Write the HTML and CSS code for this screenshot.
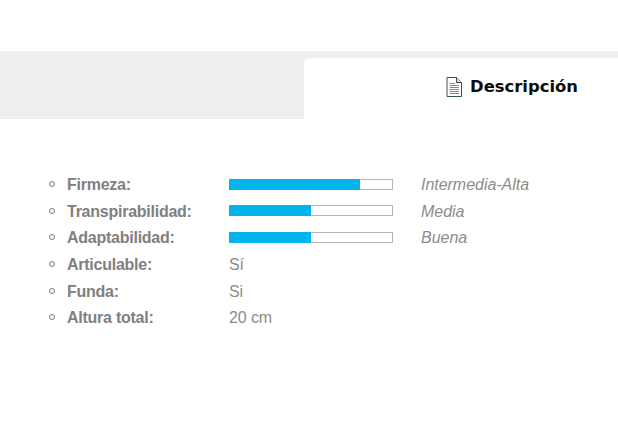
FILE: index.html
```html
<!DOCTYPE html>
<html lang="es">
<head>
    <meta charset="UTF-8">
    <title>Descripción</title>
    <link rel="stylesheet" href="styles.css">
</head>
<body>
    <!-- Tabs -->
    <div class="tabs">
        <div class="tab">
            <svg class="tab-icon" width="16" height="20" viewBox="0 0 16 20">
                <path d="M1 .5H10.500L15.500 5.500V19.500H1Z" fill="#fff" stroke="#3c5250"/>
                <path d="M10.500 .5V5.500H15.500" fill="#ddd" stroke="#3c5250"/>
                <path d="M3.500 6.500H9M3.500 8.500H13M3.500 10.500H13M3.500 12.500H13M3.500 14.500H13M3.500 16.500H13" stroke="#8a8a8a" stroke-width="1"/>
            </svg>
            <span class="tab-label">Descripción</span>
        </div>
    </div>

    <!-- Specs -->
    <ul class="specs">
        <li class="spec">
            <span class="spec-name">Firmeza:</span>
            <span class="bar"><span class="bar-fill" style="width: 80%"></span></span>
            <em class="spec-note">Intermedia-Alta</em>
        </li>
        <li class="spec">
            <span class="spec-name">Transpirabilidad:</span>
            <span class="bar"><span class="bar-fill" style="width: 50%"></span></span>
            <em class="spec-note">Media</em>
        </li>
        <li class="spec">
            <span class="spec-name">Adaptabilidad:</span>
            <span class="bar"><span class="bar-fill" style="width: 50%"></span></span>
            <em class="spec-note">Buena</em>
        </li>
        <li class="spec">
            <span class="spec-name">Articulable:</span>
            <span class="spec-value">Sí</span>
        </li>
        <li class="spec">
            <span class="spec-name">Funda:</span>
            <span class="spec-value">Si</span>
        </li>
        <li class="spec">
            <span class="spec-name">Altura total:</span>
            <span class="spec-value">20 cm</span>
        </li>
    </ul>
</body>
</html>
```

FILE: styles.css
```css
/* General */
body {
    margin: 0;
    padding: 51px 0 0;
    background: #fff;
    font-family: "Liberation Sans", Arial, sans-serif;
    color: #808080;
}

/* Tabs */
.tabs {
    display: flex;
    justify-content: flex-end;
    height: 61px;
    padding-top: 7px;
    background: #efefef;
}
.tab {
    display: flex;
    align-items: center;
    justify-content: flex-end;
    box-sizing: border-box;
    width: 314px;
    padding: 0 40px 4px 0;
    background: #fff;
    border-radius: 6px 0 0 0;
}
.tab-icon {
    margin-right: 8px;
}
.tab-label {
    font-family: "DejaVu Sans", sans-serif;
    font-size: 16.4px;
    font-weight: 700;
    color: #0b0b0b;
}

/* Specs */
.specs {
    list-style: none;
    margin: 52px 0 0;
    padding: 0 0 0 49px;
}
.spec {
    display: flex;
    align-items: center;
    height: 26.6px;
    font-size: 16px;
}
.spec::before {
    content: "";
    box-sizing: border-box;
    flex: none;
    width: 6px;
    height: 6px;
    margin-right: 12px;
    border: 1px solid #808080;
    border-radius: 50%;
}
.spec-name {
    flex: none;
    width: 162px;
    padding-top: 2px;
    font-weight: 700;
    letter-spacing: -0.25px;
}
.spec-value {
    padding-top: 2px;
    color: #8c8c8c;
    letter-spacing: -0.1px;
}
.bar {
    flex: none;
    width: 164px;
    height: 11px;
    margin-right: 28px;
    background: #fff;
    box-shadow: inset 0 0 0 1px #b5b5b5;
}
.bar-fill {
    display: block;
    height: 11px;
    background: #00b5ee;
}
.spec-note {
    padding-top: 2px;
    color: #8c8c8c;
    letter-spacing: -0.03px;
}
```
